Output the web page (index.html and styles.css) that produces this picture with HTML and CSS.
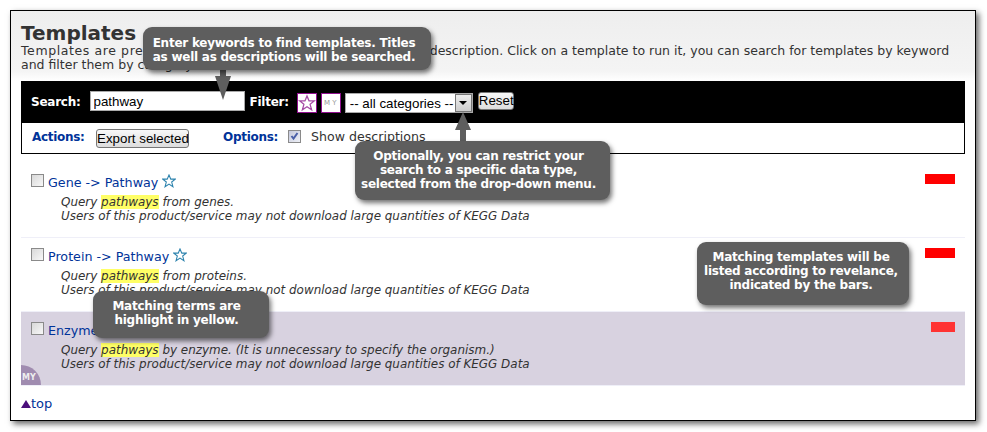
FILE: index.html
```html
<!DOCTYPE html>
<html lang="en">
<head>
  <meta charset="UTF-8">
  <meta name="viewport" content="width=device-width, initial-scale=1.0">
  <title>Templates</title>
  <link rel="stylesheet" href="styles.css">
</head>
<body>
  <div class="frame">
    <h1>Templates</h1>
    <p class="intro"><span class="intro-lead">Templates are pred</span>efined analysis workflows, with a title and a description. Click on a template to run it, you can search for templates by keyword<br>and filter them by category.</p>

    <!-- Search bar -->
    <div class="searchbar">
      <label class="bar-label">Search:</label>
      <input class="search-input" type="text" value="pathway">
      <label class="bar-label filter-label">Filter:</label>
      <span class="filter-btn">
        <svg width="20" height="20" viewBox="0 0 22 22"><path d="M11 2.500l2.500 6h6.300l-5 4.100 1.800 6.600-5.600-3.700-5.600 3.700 1.800-6.600-5-4.100h6.300z" fill="#fff" stroke="#a64ca6" stroke-width="1.600"/></svg>
      </span>
      <span class="filter-btn filter-my">MY</span>
      <span class="select-box">
        <span class="select-text">-- all categories --</span>
        <span class="select-arrow"><i></i></span>
      </span>
      <button class="btn reset-btn">Reset</button>
    </div>

    <!-- Actions and options -->
    <div class="actionbar">
      <span class="action-label">Actions:</span>
      <button class="btn export-btn">Export selected</button>
      <span class="action-label options-label">Options:</span>
      <span class="check desc-check">
        <svg width="11" height="11" viewBox="0 0 11 11"><path d="M2.500 5l2 2.500 4-5.500" fill="none" stroke="#4a5fa8" stroke-width="2"/></svg>
      </span>
      <span class="desc-label">Show descriptions</span>
    </div>

    <!-- Template list -->
    <div class="template first">
      <div class="template-title">
        <span class="check"></span>
        <a href="#">Gene -&gt; Pathway</a>
        <svg class="star" width="14" height="14" viewBox="0 0 22 22"><path d="M11 1.500l2.800 6.500h7l-5.600 4.600 2 7.400-6.200-4.100-6.200 4.100 2-7.400-5.600-4.600h7z" fill="#fff" stroke="#2b82ad" stroke-width="1.700"/></svg>
      </div>
      <p class="template-desc">Query <mark>pathways</mark> from genes.<br>Users of this product/service may not download large quantities of KEGG Data</p>
      <span class="score"></span>
    </div>
    <div class="template second">
      <div class="template-title">
        <span class="check"></span>
        <a href="#">Protein -&gt; Pathway</a>
        <svg class="star" width="14" height="14" viewBox="0 0 22 22"><path d="M11 1.500l2.800 6.500h7l-5.600 4.600 2 7.400-6.200-4.100-6.200 4.100 2-7.400-5.600-4.600h7z" fill="#fff" stroke="#2b82ad" stroke-width="1.700"/></svg>
      </div>
      <p class="template-desc">Query <mark>pathways</mark> from proteins.<br>Users of this product/service may not download large quantities of KEGG Data</p>
      <span class="score"></span>
    </div>
    <div class="template mine">
      <div class="template-title">
        <span class="check"></span>
        <a href="#">Enzyme -&gt; Pathway</a>
      </div>
      <p class="template-desc">Query <mark>pathways</mark> by enzyme. (It is unnecessary to specify the organism.)<br>Users of this product/service may not download large quantities of KEGG Data</p>
      <span class="score score-small"></span>
      <span class="my-badge">MY</span>
    </div>

    <p class="top-link"><span class="top-arrow"></span><a href="#">top</a></p>
  </div>

  <!-- Annotations over the page -->
  <svg class="arrow arrow-search" width="20" height="34" viewBox="0 0 20 34"><path d="M7 0h6v10h5l-8 24-8-24h5z"/></svg>
  <svg class="arrow arrow-select" width="20" height="34" viewBox="0 0 20 34"><path d="M10 0l8 18h-5v16h-6v-16h-5z"/></svg>
  <div class="callout callout-search">Enter keywords to find templates. Titles<br>as well as descriptions will be searched.</div>
  <div class="callout callout-select">Optionally, you can restrict your<br>search to a specific data type,<br>selected from the drop-down menu.</div>
  <div class="callout callout-terms">Matching terms are<br>highlight in yellow.</div>
  <div class="callout callout-bars">Matching templates will be<br>listed according to revelance,<br>indicated by the bars.</div>
</body>
</html>
```

FILE: styles.css
```css
/* General styling */
html, body {
  margin: 0;
  background-color: #fff;
}
body {
  position: relative;
  width: 987px;
  height: 432px;
  overflow: hidden;
  font-family: "DejaVu Sans", Verdana, sans-serif;
  color: #333;
}
.frame {
  box-sizing: border-box;
  width: 966px;
  height: 411px;
  margin: 10px 0 0 10px;
  padding: 11px 10px 0;
  border: 1px solid #000;
  background: linear-gradient(#eee 0, #f4f4f4 60px, #fff 70px);
  box-shadow: 3px 3px 6px rgba(0, 0, 0, 0.6);
}
h1 {
  margin: 0;
  font-size: 20px;
  line-height: 22px;
  font-weight: bold;
  color: #333;
}
.intro {
  margin: 0;
  height: 37px;
  font-size: 12.5px;
  line-height: 14px;
  white-space: nowrap;
}
.intro-lead {
  letter-spacing: 0.6px;
}

/* Search bar */
.searchbar {
  display: flex;
  align-items: center;
  box-sizing: border-box;
  height: 42px;
  padding-left: 10px;
  background-color: #000;
}
.bar-label {
  font-size: 12px;
  font-weight: bold;
  letter-spacing: -0.25px;
  color: #fff;
}
.search-input {
  box-sizing: border-box;
  width: 155px;
  height: 20px;
  margin: 0 0 2px 9px;
  padding: 0 3px;
  border: 1px solid #aaa;
  font-family: "Liberation Sans", Arial, sans-serif;
  font-size: 13.33px;
  color: #000;
  background: #fff;
}
.filter-label {
  margin-left: 5px;
}
.filter-btn {
  display: flex;
  align-items: center;
  justify-content: center;
  box-sizing: border-box;
  width: 20px;
  height: 20px;
  margin: 2px 0 0 8px;
  border: 1px solid #90108f;
  background: #fff;
}
.filter-my {
  margin-left: 4px;
  font-size: 7px;
  letter-spacing: 2px;
  text-indent: 1px;
  color: #999;
}
.select-box {
  display: flex;
  align-items: center;
  justify-content: space-between;
  box-sizing: border-box;
  width: 128px;
  height: 20px;
  margin: 2px 0 0 4px;
  border: 1px solid #aaa;
  background: #fff;
  font-family: "Liberation Sans", Arial, sans-serif;
  font-size: 13.33px;
  color: #000;
}
.select-text {
  padding-left: 4px;
}
.select-arrow {
  display: flex;
  align-items: center;
  justify-content: center;
  box-sizing: border-box;
  width: 17px;
  height: 18px;
  border: 1px solid #777;
  background: linear-gradient(#eee, #ccc);
}
.select-arrow i {
  width: 0;
  height: 0;
  border-left: 4px solid transparent;
  border-right: 4px solid transparent;
  border-top: 4px solid #000;
}
.btn {
  box-sizing: border-box;
  padding: 0;
  border: 1px solid #777;
  border-radius: 3px;
  background: linear-gradient(#f8f8f8, #ddd);
  font-family: "Liberation Sans", Arial, sans-serif;
  font-size: 13.33px;
  color: #000;
  white-space: nowrap;
}
.reset-btn {
  width: 36px;
  height: 18px;
  margin: 0 0 3px 5px;
}

/* Actions row */
.actionbar {
  display: flex;
  align-items: center;
  box-sizing: border-box;
  height: 31px;
  padding-left: 10px;
  border: 1px solid #000;
  border-top: none;
  background-color: #fff;
}
.action-label {
  width: 53px;
  font-size: 12px;
  font-weight: bold;
  letter-spacing: -0.3px;
  color: #003399;
  margin-bottom: 3px;
}
.export-btn {
  width: 93px;
  height: 19px;
  margin: 1px 0 0 11px;
}
.options-label {
  width: 55px;
  margin-left: 34px;
}
.check {
  display: block;
  box-sizing: border-box;
  width: 13px;
  height: 13px;
  flex: none;
  border: 1px solid #8a8a8a;
  background: linear-gradient(135deg, #d8d8d8, #f8f8f8);
}
.desc-check {
  margin: 0 0 4px 10px;
  background: linear-gradient(135deg, #c4c8dc, #eef0f6);
}
.desc-check svg {
  display: block;
}
.desc-label {
  margin: 0 0 3px 10px;
  font-size: 12.6px;
  color: #333;
}

/* Template rows */
.template {
  position: relative;
  box-sizing: border-box;
  border-bottom: 1px solid #efeff8;
}
.first {
  height: 84px;
  padding: 19px 0 0 10px;
}
.second {
  height: 74px;
  padding: 9px 0 0 10px;
}
.mine {
  height: 74px;
  padding: 9px 0 0 10px;
  background-color: #d8d2e0;
}
.template-title {
  display: flex;
  align-items: center;
  height: 18px;
  font-size: 12.7px;
}
.template-title .check {
  margin-top: -4px;
}
.template-title a {
  margin-left: 4px;
  color: #003399;
  text-decoration: none;
}
.star {
  margin: -2px 0 0 4px;
}
.template-desc {
  margin: 4px 0 0 30px;
  font-size: 11.95px;
  line-height: 14px;
  font-style: italic;
  color: #333;
}
mark {
  background-color: #ffff66;
  color: #333;
}
.score {
  position: absolute;
  top: 20px;
  right: 10px;
  width: 30px;
  height: 10px;
  background-color: #f00;
}
.second .score {
  top: 10px;
}
.score-small {
  top: 10px;
  width: 24px;
  background-color: #f33;
}
.my-badge {
  position: absolute;
  left: 0;
  bottom: 0;
  width: 20px;
  height: 20px;
  border-radius: 0 20px 0 0;
  background-color: #a08cb0;
  color: #eee;
  font-size: 8px;
  font-weight: bold;
  line-height: 26px;
  text-indent: 1px;
  overflow: hidden;
}
.top-link {
  margin: 10px 0 0;
  font-size: 13px;
}
.top-link a {
  color: #003399;
  text-decoration: none;
}
.top-arrow {
  display: inline-block;
  width: 0;
  height: 0;
  border-left: 5px solid transparent;
  border-right: 5px solid transparent;
  border-bottom: 8px solid #4b0f7b;
}

/* Annotations */
.callout {
  position: absolute;
  box-sizing: border-box;
  border-radius: 9px;
  background-color: #5e5e5e;
  box-shadow: 2px 3px 5px rgba(0, 0, 0, 0.55);
  color: #fff;
  font-size: 12px;
  font-weight: bold;
  line-height: 14px;
  letter-spacing: -0.25px;
  text-align: center;
  white-space: nowrap;
}
.callout-search {
  left: 143px;
  top: 27px;
  width: 288px;
  height: 43px;
  padding: 9px 6px 0 0;
}
.callout-select {
  left: 355px;
  top: 141px;
  width: 255px;
  height: 59px;
  padding: 8px 8px 0 0;
}
.callout-terms {
  left: 93px;
  top: 291px;
  width: 176px;
  height: 47px;
  padding: 8px 9px 0 0;
}
.callout-bars {
  left: 697px;
  top: 242px;
  width: 212px;
  height: 63px;
  padding: 8px 4px 0 0;
}
.arrow {
  position: absolute;
  fill: #5e5e5e;
}
.arrow-search {
  left: 213px;
  top: 66px;
}
.arrow-select {
  left: 453px;
  top: 112px;
}
```
